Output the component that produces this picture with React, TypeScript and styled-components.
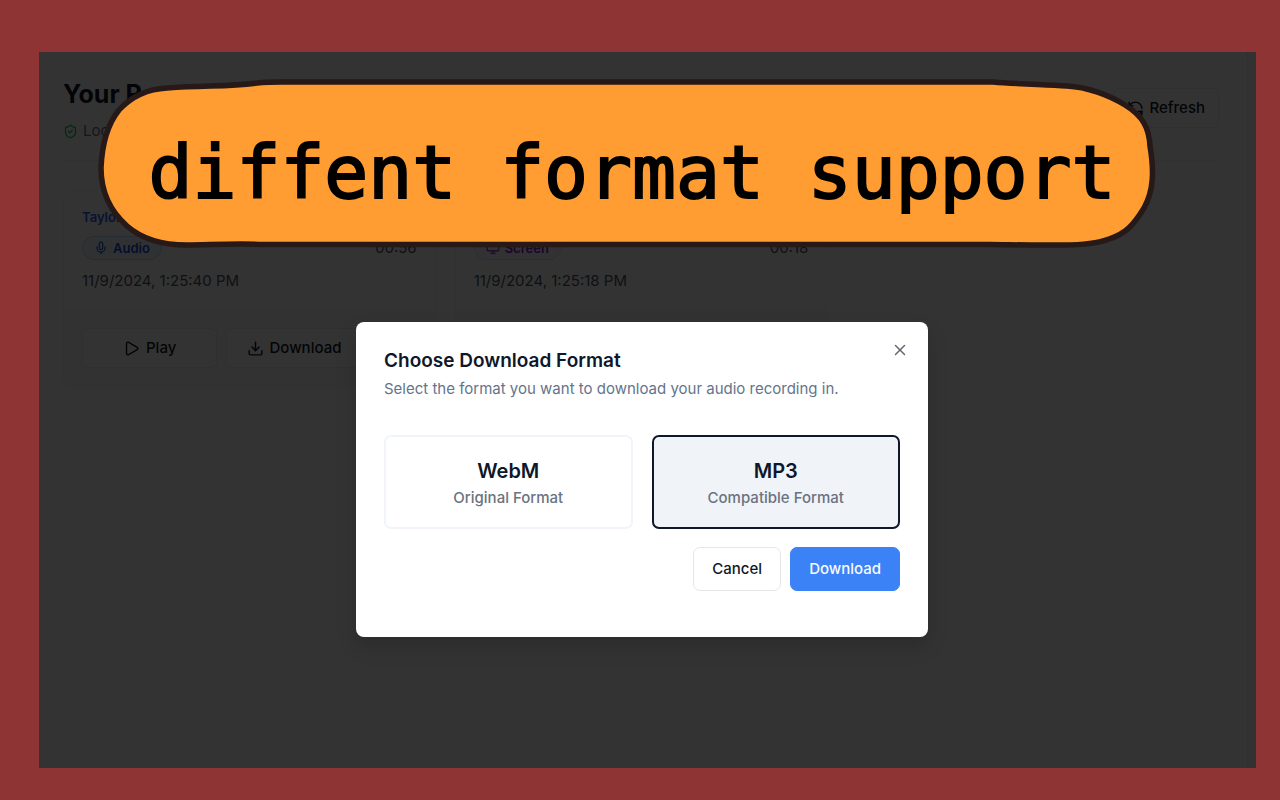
import React, { useState } from "react";
import styled, { createGlobalStyle, css } from "styled-components";
import { Download, Mic, Monitor, Play, RefreshCcw, ShieldCheck, Trash2, X } from "lucide-react";

const GlobalStyle = createGlobalStyle`
  *, *::before, *::after { box-sizing: border-box; }
  body { margin: 0; background: #8e3434; }
  h1, h2, p { margin: 0; }
  button { font: inherit; cursor: pointer; }
`;

const Page = styled.div`
  min-height: 100vh;
  display: flex;
  padding: 52px 24px 32px 39px;
  background: #8e3434;
  font-family: Inter, "Liberation Sans", sans-serif;
  font-size: 15px;
  line-height: 24px;
  color: #0f172a;
`;

const Frame = styled.div`
  position: relative;
  flex: 1;
  display: flex;
  background: #ffffff;
`;

const Content = styled.main`
  flex: 1;
  min-width: 0;
  padding: 24px 28px 24px 24px;
`;

const Gutter = styled.div`
  width: 9px;
  border-left: 1px solid #e8e8e8;
  background: #fafafa;
`;

const Header = styled.header`
  display: flex;
  justify-content: space-between;
  align-items: flex-start;
  padding-bottom: 17px;
  border-bottom: 1px solid #f1f5f9;
`;

const Title = styled.h1`
  font-size: 25px;
  line-height: 36px;
  font-weight: 700;
`;

const Storage = styled.p`
  display: flex;
  align-items: center;
  gap: 5px;
  margin-top: 7px;
  color: #64748b;

  svg { color: #22c55e; }
`;

const Actions = styled.div`
  display: flex;
  gap: 18px;
  padding-top: 12px;
`;

const OutlineButton = styled.button<{ $grow?: boolean }>`
  display: flex;
  align-items: center;
  justify-content: center;
  gap: 6px;
  height: 40px;
  padding: 0 13px;
  border: 1px solid #e2e8f0;
  border-radius: 6px;
  background: #ffffff;
  color: #0f172a;
  font-weight: 500;
  ${(p) => p.$grow && css`flex: 1;`}
`;

const Grid = styled.section`
  display: grid;
  grid-template-columns: repeat(3, 1fr);
  gap: 19px;
  margin-top: 29px;
`;

const Card = styled.article`
  border: 1px solid #f1f5f9;
  border-radius: 8px;
  overflow: hidden;
`;

const CardBody = styled.div`
  padding: 16px 18px;
`;

const Source = styled.a`
  display: block;
  font-size: 13px;
  line-height: 20px;
  font-weight: 600;
  color: #2563eb;
  text-decoration: none;
`;

const Row = styled.div`
  display: flex;
  justify-content: space-between;
  align-items: center;
  margin: 9px 0;
`;

const Badge = styled.span<{ $tone: "blue" | "purple" }>`
  display: flex;
  align-items: center;
  gap: 5px;
  height: 24px;
  padding: 0 11px;
  border-radius: 12px;
  font-size: 13px;
  font-weight: 600;
  border: 1px solid ${(p) => (p.$tone === "blue" ? "#bfdbfe" : "#e9d5ff")};
  background: ${(p) => (p.$tone === "blue" ? "#eff6ff" : "#faf5ff")};
  color: ${(p) => (p.$tone === "blue" ? "#1d4ed8" : "#7e22ce")};
`;

const Muted = styled.p`
  color: #4b5563;
`;

const CardFooter = styled.div`
  display: flex;
  gap: 9px;
  padding: 19px 18px;
  background: #f9fafb;
`;

const Overlay = styled.div`
  position: absolute;
  inset: 0;
  display: flex;
  justify-content: center;
  align-items: flex-start;
  padding: 270px 11px 24px 0;
  background: rgba(0, 0, 0, 0.8);
`;

const Dialog = styled.div`
  position: relative;
  width: 572px;
  max-width: 90%;
  padding: 27px 28px 46px;
  border-radius: 8px;
  background: #ffffff;
  box-shadow: 0 10px 20px rgba(0, 0, 0, 0.15);
`;

const DialogTitle = styled.h2`
  font-size: 19px;
  line-height: 24px;
  font-weight: 600;
`;

const DialogText = styled.p`
  margin-top: 4px;
  color: #64748b;
`;

const Close = styled.button`
  position: absolute;
  top: 19px;
  right: 19px;
  display: flex;
  padding: 0;
  border: 0;
  background: none;
  color: #64686f;
`;

const Options = styled.div`
  display: grid;
  grid-template-columns: 1fr 1fr;
  gap: 19px;
  margin-top: 34px;
`;

const Option = styled.button<{ $selected: boolean }>`
  display: flex;
  flex-direction: column;
  align-items: center;
  justify-content: center;
  height: 94px;
  gap: 3px;
  padding-top: 6px;
  border: 2px solid ${(p) => (p.$selected ? "#0f172a" : "#f1f5f9")};
  border-radius: 7px;
  background: ${(p) => (p.$selected ? "#f0f4f9" : "#ffffff")};
  color: #6b7280;
  font-weight: 500;

  strong {
    font-size: 20px;
    font-weight: 600;
    color: #0f172a;
  }
`;

const DialogFooter = styled.div`
  display: flex;
  justify-content: flex-end;
  gap: 9px;
  margin-top: 18px;
`;

const DialogButton = styled.button<{ $primary?: boolean }>`
  height: 44px;
  padding: 0 18px;
  border: 1px solid ${(p) => (p.$primary ? "#3b82f6" : "#e5e7eb")};
  border-radius: 7px;
  background: ${(p) => (p.$primary ? "#3b82f6" : "#ffffff")};
  color: ${(p) => (p.$primary ? "#f8fafc" : "#0f172a")};
  font-weight: 500;
`;

const Banner = styled.div`
  position: absolute;
  top: 26px;
  left: 58px;
  right: 99px;
  height: 170px;
  display: flex;
  align-items: center;
  justify-content: center;

  svg {
    position: absolute;
    inset: 0;
    width: 100%;
    height: 100%;
  }
`;

const BannerText = styled.p`
  position: relative;
  padding: 20px 0 0 10px;
  font-family: "DejaVu Sans Mono", "Liberation Mono", monospace;
  font-size: 73px;
  line-height: 88px;
  white-space: nowrap;
  color: #000000;
  -webkit-text-stroke: 2px #000000;
`;

type Recording = {
  source: string;
  kind: "Audio" | "Screen";
  length: string;
  date: string;
};

const recordings: Recording[] = [
  { source: "Taylor", kind: "Audio", length: "00:56", date: "11/9/2024, 1:25:40 PM" },
  { source: "Taylor", kind: "Screen", length: "00:18", date: "11/9/2024, 1:25:18 PM" },
];

const formats = [
  { name: "WebM", note: "Original Format" },
  { name: "MP3", note: "Compatible Format" },
];

function RecordingCard({ source, kind, length, date }: Recording) {
  const Icon = kind === "Audio" ? Mic : Monitor;
  return (
    <Card>
      <CardBody>
        <Source href="#">{source}</Source>
        <Row>
          <Badge $tone={kind === "Audio" ? "blue" : "purple"}>
            <Icon size={14} />
            {kind}
          </Badge>
          <Muted>{length}</Muted>
        </Row>
        <Muted>{date}</Muted>
      </CardBody>
      <CardFooter>
        <OutlineButton $grow><Play size={17} />Play</OutlineButton>
        <OutlineButton $grow><Download size={17} />Download</OutlineButton>
        <OutlineButton aria-label="Delete"><Trash2 size={18} /></OutlineButton>
      </CardFooter>
    </Card>
  );
}

export default function App() {
  const [format, setFormat] = useState("MP3");
  return (
    <Page>
      <GlobalStyle />
      <Frame>
        <Content>
          <Header>
            <div>
              <Title>Your Recordings</Title>
              <Storage><ShieldCheck size={15} />Local storage</Storage>
            </div>
            <Actions>
              <OutlineButton><RefreshCcw size={17} />Refresh</OutlineButton>
            </Actions>
          </Header>
          <Grid>
            {recordings.map((r) => <RecordingCard key={r.date} {...r} />)}
          </Grid>
        </Content>
        <Gutter />
        <Overlay>
          <Dialog role="dialog" aria-labelledby="format-title">
            <DialogTitle id="format-title">Choose Download Format</DialogTitle>
            <DialogText>Select the format you want to download your audio recording in.</DialogText>
            <Close aria-label="Close"><X size={18} strokeWidth={2} /></Close>
            <Options>
              {formats.map((f) => (
                <Option
                  key={f.name}
                  $selected={format === f.name}
                  aria-pressed={format === f.name}
                  onClick={() => setFormat(f.name)}
                >
                  <strong>{f.name}</strong>
                  <span>{f.note}</span>
                </Option>
              ))}
            </Options>
            <DialogFooter>
              <DialogButton>Cancel</DialogButton>
              <DialogButton $primary>Download</DialogButton>
            </DialogFooter>
          </Dialog>
        </Overlay>
        <Banner>
          <svg viewBox="0 0 1060 170" preserveAspectRatio="none" aria-hidden="true">
            <path
              d="M4 90 C5 66 10 47 22 32 C35 18 50 11 70 10 C110 7 130 9 160 5 C170 4 180 4 186 4 L896 4 C920 6 945 6.500 970 8 C990 9 1012 17 1028 27 C1046 38 1052 50 1053 68 C1057 92 1057 112 1047 130 C1036 148 1028 156 1012 161 C998 166.500 980 167 966 167 C930 167.500 910 166.500 893 166.500 L166 166.500 C140 165 110 167 90 167 C66 167 46 162 30 148 C12 132 4 112 4 90 Z"
              fill="#ff9d33"
              stroke="#261917"
              strokeWidth="5.500"
            />
          </svg>
          <BannerText>diffent format support</BannerText>
        </Banner>
      </Frame>
    </Page>
  );
}
